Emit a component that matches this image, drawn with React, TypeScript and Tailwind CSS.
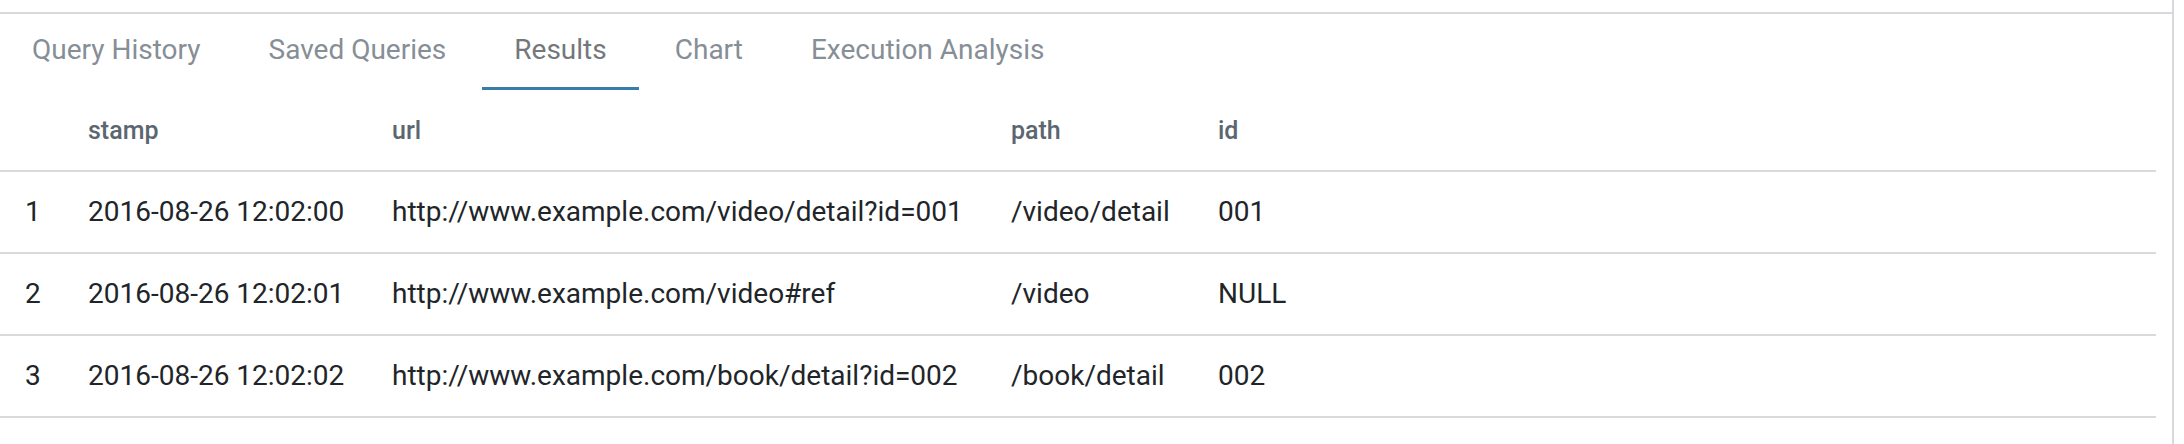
import React from "react";

const tabs = ["Query History", "Saved Queries", "Results", "Chart", "Execution Analysis"];

const rows = [
  ["1", "2016-08-26 12:02:00", "http://www.example.com/video/detail?id=001", "/video/detail", "001"],
  ["2", "2016-08-26 12:02:01", "http://www.example.com/video#ref", "/video", "NULL"],
  ["3", "2016-08-26 12:02:02", "http://www.example.com/book/detail?id=002", "/book/detail", "002"],
];

export default function App() {
  return (
    <div className="w-[2184px] h-[444px] bg-white" style={{ fontFamily: "Roboto, 'Liberation Sans', sans-serif" }}>
      <div className="w-[2174px] h-[444px] border-r-2 border-[#d9d9dd] pt-[12px]">
        <div className="border-t-2 border-[#d9d9dd] flex gap-[4px]">
          {tabs.map((t) => {
            const active = t === "Results";
            return (
              <div
                key={t}
                className={
                  "px-[32px] pt-[20px] pb-[21px] leading-[32px] text-[28px] border-b-[3px] " +
                  (active ? "border-[#3a7ca8] text-[#74777b]" : "border-transparent text-[#868e96]")
                }
              >
                {t}
              </div>
            );
          })}
        </div>
        <table className="table-fixed w-[2156px] border-collapse">
          <colgroup>
            <col className="w-[63px]" />
            <col className="w-[304px]" />
            <col className="w-[619px]" />
            <col className="w-[207px]" />
            <col />
          </colgroup>
          <thead>
            <tr className="border-b-2 border-[#dadade]">
              {["", "stamp", "url", "path", "id"].map((h, i) => (
                <th
                  key={i}
                  className="pl-[25px] pt-[26px] pb-[24px] leading-[30px] text-[25px] font-medium text-left text-[#5c6670]"
                >
                  {h}
                </th>
              ))}
            </tr>
          </thead>
          <tbody>
            {rows.map((r) => (
              <tr key={r[0]} className="border-b-2 border-[#dadade]">
                {r.map((c, i) => (
                  <td
                    key={i}
                    className="pl-[25px] pt-[24px] pb-[24px] leading-[32px] text-[28px] text-[#212529] whitespace-nowrap"
                  >
                    {c}
                  </td>
                ))}
              </tr>
            ))}
          </tbody>
        </table>
      </div>
    </div>
  );
}
